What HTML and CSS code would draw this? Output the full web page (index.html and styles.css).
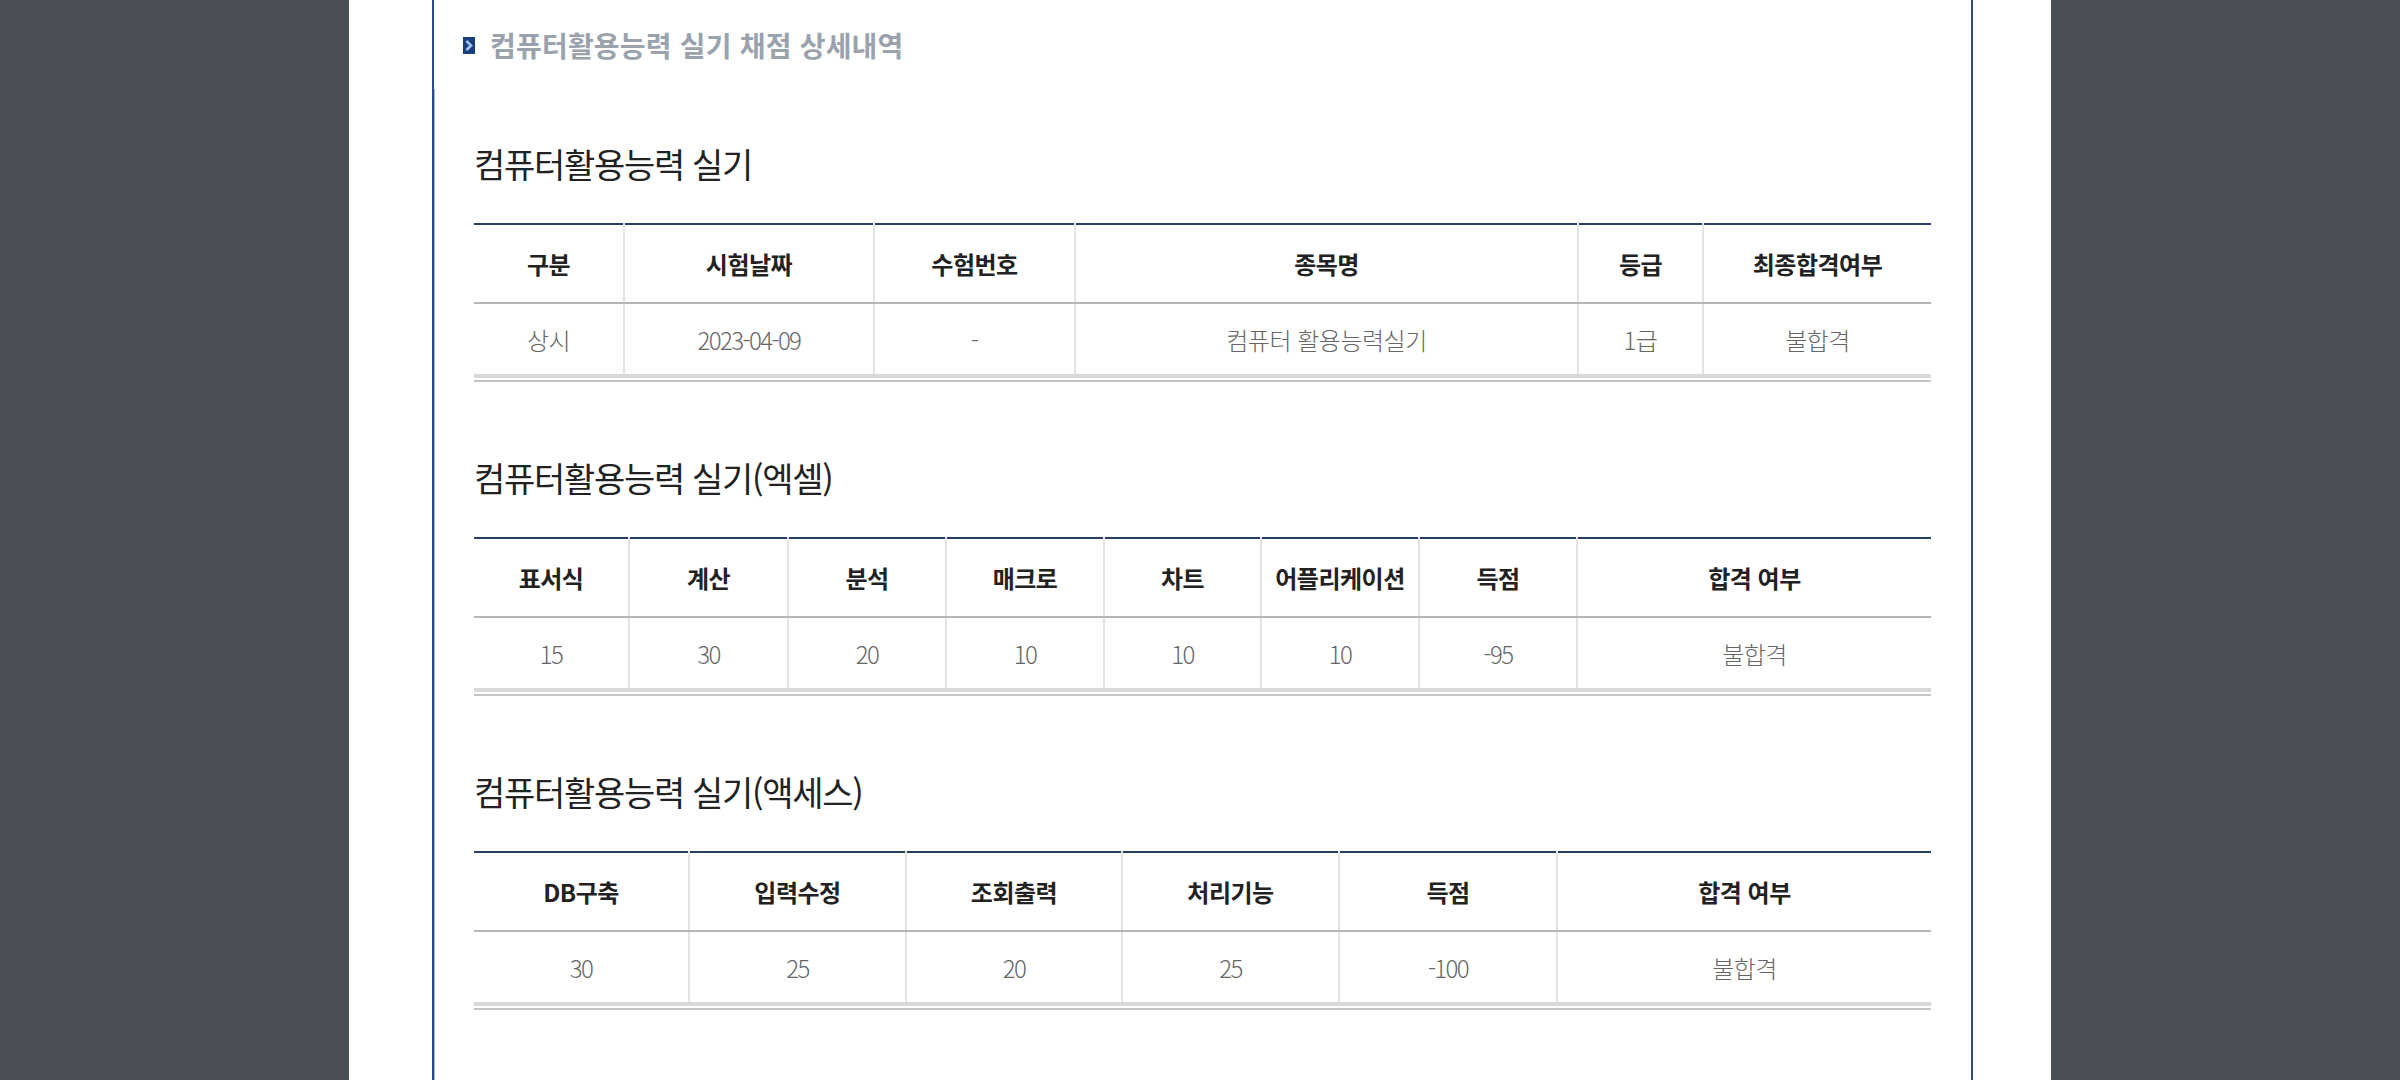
FILE: index.html
```html
<!DOCTYPE html>
<html lang="ko">
<head>
<meta charset="utf-8">
<title>컴퓨터활용능력 실기 채점 상세내역</title>
<link rel="stylesheet" href="styles.css">
</head>
<body>
<div class="page">
  <div class="panel">
    <div class="title-bar">
      <svg class="title-icon" width="12" height="17" viewBox="0 0 12 17" aria-hidden="true">
        <rect x="0" y="0" width="12" height="17" fill="#1b3f7c"/>
        <polyline points="3.5,4 8,8.5 3.5,13" fill="none" stroke="#9cc6f5" stroke-width="2.6"/>
      </svg>
      <h2 class="title">컴퓨터활용능력 실기 채점 상세내역</h2>
    </div>
    <div class="content">
      <section class="block">
        <h3 class="sub">컴퓨터활용능력 실기</h3>
        <div class="tbl-wrap">
          <table class="tbl">
            <colgroup>
              <col class="w150"><col class="w250"><col class="w201"><col class="w503"><col class="w125"><col class="w228">
            </colgroup>
            <thead>
              <tr><th>구분</th><th>시험날짜</th><th>수험번호</th><th>종목명</th><th>등급</th><th>최종합격여부</th></tr>
            </thead>
            <tbody>
              <tr><td>상시</td><td class="num">2023-04-09</td><td>-</td><td>컴퓨터 활용능력실기</td><td>1급</td><td>불합격</td></tr>
            </tbody>
          </table>
        </div>
      </section>
      <section class="block">
        <h3 class="sub">컴퓨터활용능력 실기(엑셀)</h3>
        <div class="tbl-wrap">
          <table class="tbl">
            <colgroup>
              <col class="w155"><col class="w159"><col class="w158"><col class="w158"><col class="w157"><col class="w158"><col class="w158"><col class="w354">
            </colgroup>
            <thead>
              <tr><th>표서식</th><th>계산</th><th>분석</th><th>매크로</th><th>차트</th><th>어플리케이션</th><th>득점</th><th>합격 여부</th></tr>
            </thead>
            <tbody>
              <tr><td class="num">15</td><td class="num">30</td><td class="num">20</td><td class="num">10</td><td class="num">10</td><td class="num">10</td><td class="num">-95</td><td>불합격</td></tr>
            </tbody>
          </table>
        </div>
      </section>
      <section class="block">
        <h3 class="sub">컴퓨터활용능력 실기(액세스)</h3>
        <div class="tbl-wrap">
          <table class="tbl">
            <colgroup>
              <col class="w215"><col class="w217"><col class="w216"><col class="w217"><col class="w218"><col class="w374">
            </colgroup>
            <thead>
              <tr><th>DB구축</th><th>입력수정</th><th>조회출력</th><th>처리기능</th><th>득점</th><th>합격 여부</th></tr>
            </thead>
            <tbody>
              <tr><td class="num">30</td><td class="num">25</td><td class="num">20</td><td class="num">25</td><td class="num">-100</td><td>불합격</td></tr>
            </tbody>
          </table>
        </div>
      </section>
    </div>
  </div>
</div>
</body>
</html>
```
FILE: styles.css
```css
html, body {
  margin: 0;
  padding: 0;
}
body {
  background: #4a4f55;
  font-family: "Noto Sans CJK KR", "Noto Sans", sans-serif;
  color: #222;
}
.page {
  width: 1702px;
  min-height: 1080px;
  margin: 0 auto;
  background: #fff;
  padding: 0 78px 0 83px;
  box-sizing: border-box;
}
.panel {
  border-left: 2px solid #244c8e;
  border-right: 2px solid #2a4a80;
  min-height: 1080px;
  box-sizing: border-box;
}
.title-bar {
  height: 89px;
  display: flex;
  align-items: center;
  padding-left: 29px;
  gap: 15px;
}
.title-icon {
  display: block;
  flex: none;
  margin-top: 2px;
}
.title {
  margin: 0;
  font-size: 28px;
  font-weight: 700;
  color: #99a2ad;
  letter-spacing: 0.2px;
  line-height: 40px;
}
.content {
  border-left: 1px solid #a9b5da;
  padding: 55px 40px 40px 39px;
  min-height: 991px;
  box-sizing: border-box;
}
.block + .block {
  margin-top: 76px;
}
.sub {
  margin: 0 0 39px;
  font-size: 34px;
  font-weight: 400;
  line-height: 40px;
  letter-spacing: -1.3px;
  color: #222;
}
.tbl-wrap {
  border-bottom: 2px solid #c4c4c4;
  padding-bottom: 2px;
}
.tbl {
  width: 1457px;
  border-collapse: collapse;
  table-layout: fixed;
  border-top: 2px solid #2a3f68;
  border-bottom: 4px solid #d9d9d9;
}
.tbl th, .tbl td {
  padding: 0;
  text-align: center;
  font-size: 24px;
  letter-spacing: -0.5px;
  border-left: 2px solid #e4e4e4;
}
.tbl th:first-child, .tbl td:first-child {
  border-left: none;
}
.tbl th {
  height: 77px;
  font-weight: 700;
  color: #222;
  border-bottom: 2px solid #b5b5b5;
}
.tbl td {
  height: 70px;
  font-weight: 300;
  color: #666;
}
.tbl td.num {
  letter-spacing: -1.6px;
}
.w150 { width: 150px; }
.w250 { width: 250px; }
.w201 { width: 201px; }
.w503 { width: 503px; }
.w125 { width: 125px; }
.w228 { width: 228px; }
.w155 { width: 155px; }
.w159 { width: 159px; }
.w158 { width: 158px; }
.w157 { width: 157px; }
.w354 { width: 354px; }
.w215 { width: 215px; }
.w217 { width: 217px; }
.w216 { width: 216px; }
.w218 { width: 218px; }
.w374 { width: 374px; }
```
